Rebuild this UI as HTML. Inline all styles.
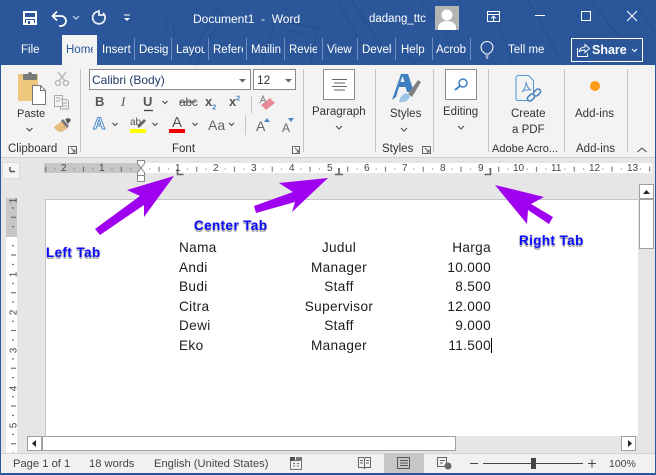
<!DOCTYPE html>
<html><head><meta charset="utf-8"><style>
html,body{margin:0;padding:0}
body{width:656px;height:475px;overflow:hidden;position:relative;background:#e6e6e6;font-family:"Liberation Sans",sans-serif;color:#333}
.t{position:absolute;white-space:nowrap;line-height:14px;font-size:11.5px}
.w{color:#fff}
.c{overflow:hidden}
.b{position:absolute}
.d{position:absolute;font-size:13.6px;letter-spacing:.35px;line-height:16px;color:#1c1c1c;white-space:nowrap}
.ctr{transform:translateX(-50%)}
.r{transform:translateX(-100%)}
.lab{position:absolute;font:bold 13.4px "Liberation Sans",sans-serif;letter-spacing:.45px;line-height:15px;color:#0a0aff;white-space:nowrap;text-shadow:0 2px 0 #aaa,1px 1px 0 #ddd,-1px 1px 0 #ddd,1px 0 0 #eee,-1px 0 0 #eee}
.n{position:absolute;white-space:nowrap;top:163px;font-size:10px;line-height:11px;color:#444}
.v{position:absolute;white-space:nowrap;left:10.5px;font-size:10px;line-height:11px;color:#444;transform:rotate(-90deg)}
.s{position:absolute;white-space:nowrap;top:457px;font-size:11.2px;line-height:14px;color:#444}
svg{position:absolute;left:0;top:0}
</style></head><body>
<div class="b" style="left:0;top:0;width:656px;height:65px;background:#2b579a"></div>
<div class="b" style="left:0;top:65px;width:656px;height:92px;background:#f3f3f3"></div>
<div class="b" style="left:0;top:157px;width:656px;height:1px;background:#d2d2d2"></div>
<div class="b" style="left:62px;top:35px;width:35px;height:30px;background:#f3f3f3"></div>
<div class="b" style="left:45px;top:199px;width:593px;height:237px;background:#fff;border-top:1px solid #c6c6c6;border-left:1px solid #c6c6c6;box-sizing:border-box"></div>
<div class="b" style="left:44px;top:163px;width:96px;height:10px;background:#c6c6c6"></div>
<div class="b" style="left:140px;top:163px;width:512px;height:10px;background:#fff"></div>
<div class="b" style="left:6px;top:198px;width:11px;height:39px;background:#c6c6c6"></div>
<div class="b" style="left:6px;top:237px;width:11px;height:216px;background:#fff"></div>
<div class="b" style="left:2px;top:162px;width:18px;height:17px;background:#f4f4f4;border:1px solid #dcdcdc;box-sizing:border-box"></div>
<div class="b" style="left:0;top:453px;width:656px;height:20px;background:#f1f1f1;border-top:1px solid #d4d4d4;box-sizing:border-box"></div>
<div class="b" style="left:384px;top:453px;width:40px;height:20px;background:#c6c6c6"></div>
<div class="b" style="left:0;top:473px;width:656px;height:2px;background:#2b579a"></div>
<div class="b" style="left:0;top:65px;width:1px;height:410px;background:#2b579a"></div>
<div class="b" style="left:655px;top:65px;width:1px;height:410px;background:#2b579a"></div>

<svg width="656" height="475" viewBox="0 0 656 475" fill="none">
<defs><pattern id="tk" x="140" y="163" width="37.75" height="10" patternUnits="userSpaceOnUse">
<rect x="9.2" y="5.5" width="1" height="1" fill="#666"/><rect x="18.5" y="3.7" width="1" height="5" fill="#666"/><rect x="27.9" y="5.5" width="1" height="1" fill="#666"/></pattern>
<pattern id="tv" x="6" y="236" width="11" height="37.75" patternUnits="userSpaceOnUse">
<rect x="6" y="9.2" width="2" height="1" fill="#555"/><rect x="5" y="18.5" width="5" height="1" fill="#555"/><rect x="6" y="27.9" width="2" height="1" fill="#555"/></pattern></defs>
<!-- background doodles -->
<g stroke="#264f8e" stroke-width="1.5">
<path d="M188 62 L218 8 L224 12 L196 65M168 30 q-6 -10 -1 -12 q5 0 6 8 l2 12"/>
<path d="M262 64 L275 20 L318 28 L310 64M285 30 l18 4M338 0 L362 46M352 0 L384 50M420 0 L448 38M528 0 L560 58M590 0 L622 40M640 10 L656 34M408 56 q6 8 14 2M490 4 L512 60"/>
</g>
<!-- save -->
<rect x="24" y="12" width="12" height="12" stroke="#fff" stroke-width="2"/>
<rect x="25" y="17" width="10" height="2" fill="#fff"/><rect x="26" y="20" width="8" height="4" fill="#fff"/><rect x="28" y="21" width="2" height="3" fill="#2b579a"/>
<!-- undo -->
<path d="M53 16 H61 a5 5 0 0 1 0 10 h-2M57 11.5 L52.5 16 L57 20.5" stroke="#fff" stroke-width="1.7"/>
<path d="M73 16 l3 3 l3 -3" stroke="#cdd8ea" stroke-width="1.2"/>
<path d="M98 11.5 a6.2 6.2 0 1 0 5 1.5M99 10 v5 h5" stroke="#e8edf5" stroke-width="1.8"/>
<path d="M124 15 h6" stroke="#fff"/><path d="M124 18 h6 l-3 3z" fill="#fff"/>
<!-- avatar -->
<rect x="435" y="6" width="24" height="24" fill="#b4b4b4"/><circle cx="447" cy="15" r="5.5" fill="#fff"/><path d="M438 30 v-4 q2 -4 7 -5 h4 q5 1 7 5 v4z" fill="#fff"/>
<!-- window ctrls -->
<path d="M487.5 11.5 h12 v10 h-12zM487.5 14.5 h12M493.5 21 v-4M491 18.5 l2.500 -2.500 l2.500 2.500" stroke="#fff"/>
<path d="M535 15.5 h10" stroke="#fff"/><rect x="581.5" y="11.5" width="9" height="9" stroke="#fff"/>
<path d="M627 11 l10 10M637 11 l-10 10" stroke="#fff"/>
<!-- tab separators -->
<g stroke="#6f90bf"><path d="M134.5 38 V60M171.5 38 V60M208.5 38 V60M246.5 38 V60M284.5 38 V60M322.5 38 V60M357.5 38 V60M395.5 38 V60M432.5 38 V60M470.5 38 V60"/></g>
<path d="M485.5 54 q-4.500 -3 -4.500 -6.500 a6 6 0 0 1 12 0 q0 3.500 -4.500 6.500zM485.500 56 h3M486 58 h2" stroke="#fff"/>
<rect x="571.5" y="38.5" width="71" height="23" stroke="#fff"/>
<path d="M577.5 48 v8.5 h10 v-3M579 52 q1 -5 6 -5 v-2.5 l4.5 4 l-4.5 4 v-2.5 q-4 0 -6 2" stroke="#fff"/>
<path d="M632 49 l2.5 2.5 l2.5 -2.5" stroke="#fff"/>
<!-- group separators -->
<g stroke="#c6c6c6"><path d="M80.5 69 V152M303.5 69 V152M375.5 69 V152M433.5 69 V152M488.5 69 V152M564.5 69 V152M627.5 69 V152M251.5 96 V113M245.5 115 V135"/></g>
<!-- paste -->
<rect x="18" y="74" width="20" height="27" rx="1" fill="#ecc77c"/><rect x="23" y="74" width="14" height="6" rx="1" fill="#7a7a7a"/><circle cx="30" cy="74" r="2" fill="#7a7a7a"/>
<path d="M32.5 85.5 h8 l5 5 v14 h-13z" fill="#fff" stroke="#777"/><path d="M40.500 85.500 v5 h5" stroke="#777"/>
<path d="M26.500 128 l3 3 l3 -3" stroke="#444"/>
<!-- scissors etc -->
<g stroke="#b3b3b3" stroke-width="1.3"><circle cx="58" cy="83" r="2.500"/><circle cx="66" cy="83" r="2.500"/><path d="M59 81 L66 72M65 81 L58 72"/></g>
<g stroke="#a9a9a9"><path d="M54.500 95.500 h8 v11 h-8zM60.500 99.500 h6 l2 2 v7.500 h-8 v-2M56 98 h4M56 101 h4M62 103 h5M62 106 h5"/></g>
<path d="M54 127 l8 -6 l6 7 l-6 4 q-6 0 -8 -5z" fill="#e8bd82"/><path d="M61 121 l6 7 l2 -2 l-6 -7z" fill="#777"/><path d="M65 119 l4 -1 l2 2 l-3 4z" fill="#555"/>
<!-- font boxes -->
<rect x="89.5" y="69.5" width="161" height="20" fill="#fff" stroke="#8b8b8b"/><path d="M239 79 h7 l-3.500 3.500z" fill="#666"/>
<rect x="253.5" y="69.5" width="42" height="20" fill="#fff" stroke="#8b8b8b"/><path d="M285 79 h7 l-3.500 3.500z" fill="#666"/>
<!-- underline etc -->
<path d="M144 110.5 h9" stroke="#444" stroke-width="1.3"/>
<path d="M162.5 101 l2.500 2.500 l2.500 -2.500" stroke="#444"/>
<path d="M179 102 h17" stroke="#444" stroke-width="1"/>
<!-- eraser -->
<path d="M261 105 l9 -7 l5 5 l-9 7z" fill="#e98a96"/>
<path d="M260 103 l3 -7 l3 7M261.500 100.500 h3" stroke="#888"/>
<!-- row2 chevrons -->
<g stroke="#444"><path d="M112.500 123 l2.500 2.500 l2.500 -2.500M152.500 123 l2.500 2.500 l2.500 -2.500M192.500 123 l2.500 2.500 l2.500 -2.500M229 123 l2.500 2.500 l2.500 -2.500"/></g>
<rect x="130" y="129" width="16" height="4" fill="#ffff00"/>
<path d="M137 126 l7 -7 l2 2 l-7 7z" fill="#666"/>
<rect x="169" y="129" width="16" height="4" fill="#f00000"/>
<path d="M264 122 l3 -4 l3 4z" fill="#4a86c5"/><path d="M288 118 h6 l-3 4z" fill="#4a86c5"/>
<!-- launchers -->
<g stroke="#666"><path d="M68.500 146.500 h8 v7 h-8zM71 148 l4 4M75 149.500 v2.500 h-2.500"/><path d="M292.500 146.500 h7 v7 h-7zM295 148 l4 4M299 149.500 v2.500 h-2.500"/><path d="M422.500 146.500 h8 v7 h-8zM425 148 l4 4M429 149.500 v2.500 h-2.500"/></g>
<path d="M637.500 152 l4.500 -4 l4.500 4" stroke="#444"/>
<!-- paragraph -->
<rect x="323.5" y="69.5" width="31" height="30" fill="#fff" stroke="#8b8b8b"/>
<path d="M332 79.5 h15M334 83 h11M332 86.500 h15M334 90 h11" stroke="#666"/>
<path d="M336 126 l3 3 l3 -3M401 128 l3 3 l3 -3M458 126 l3 3 l3 -3" stroke="#444"/>
<!-- styles -->
<path d="M392 100 L401 74 H408 L414 92 H407 L405.500 87 H399 L396 97 z" fill="#3f7fc1"/><path d="M400.500 82 H404.500 L402.500 76z" fill="#f3f3f3"/>
<path d="M399 102 q1 -7 7 -9 l4 3 q-2 7 -11 6z" fill="#9cc3e6"/><path d="M408 94 l10 -14 l3 2 l-9 15z" fill="#7f7f7f"/>
<!-- editing -->
<rect x="445.5" y="69.5" width="31" height="30" fill="#fff" stroke="#8b8b8b"/>
<circle cx="463" cy="83" r="4" stroke="#3f7fc1" stroke-width="1.500"/><path d="M460 86 l-5 4" stroke="#3f7fc1" stroke-width="2"/>
<!-- pdf -->
<path d="M518.5 75.5 h10 l5 5 v17 q0 3 -3 3 h-12 q-3 0 -2.500 -3 v-19 q0 -3 2.500 -3z" stroke="#5a94d0" fill="#f3f3f3"/>
<path d="M522 92 q4 -4 4 -10 q1 6 5 8 q-6 -1 -9 2z" stroke="#5a94d0"/>
<g stroke="#3f7fc1" stroke-width="1.500"><rect x="527" y="95" width="8" height="5" rx="2.500" transform="rotate(-45 531 97.500)" fill="#f3f3f3"/><rect x="533" y="90" width="8" height="5" rx="2.500" transform="rotate(-45 537 92.500)" fill="#f3f3f3"/></g>
<circle cx="595" cy="86" r="5" fill="#ff9a1a"/>
<!-- tab selector -->
<path d="M10 171.500 h5 M10 167 v4.500" stroke="#555" stroke-width="1.500"/>
<!-- ruler -->
<rect x="44" y="163" width="608" height="10" fill="url(#tk)"/>
<rect x="6" y="198" width="11" height="255" fill="url(#tv)"/>
<!-- indents -->
<path d="M137.500 160.500 h7 v3 l-3.500 4.500 l-3.500 -4.500zM137.500 175.500 v-3 l3.500 -4.500 l3.500 4.500 v3z" fill="#fff" stroke="#888"/><rect x="137.5" y="175.5" width="7" height="6" fill="#fff" stroke="#888"/>
<!-- tab stops -->
<path d="M177.500 169 v5.500 h6" stroke="#666" stroke-width="1.600"/>
<path d="M335 174.500 h8 M339 168 v6.500" stroke="#666" stroke-width="1.600"/>
<path d="M490.500 168 v6.500 h-6" stroke="#666" stroke-width="1.600"/>
<!-- scrollbars -->
<rect x="639.500" y="184.500" width="14" height="14" fill="#fff" stroke="#a0a0a0"/><path d="M643 194 h7 l-3.500 -4z" fill="#222"/>
<rect x="639.500" y="199.500" width="14" height="49" fill="#fff" stroke="#a0a0a0"/>
<rect x="27.500" y="436.500" width="14" height="14" fill="#fff" stroke="#a0a0a0"/><path d="M36 440 v7 l-4 -3.500z" fill="#222"/>
<rect x="42.500" y="436.500" width="413" height="14" fill="#fff" stroke="#a0a0a0"/>
<rect x="621.500" y="436.500" width="14" height="14" fill="#fff" stroke="#a0a0a0"/><path d="M628 440 v7 l4 -3.500z" fill="#222"/>
<!-- status icons -->
<g stroke="#777"><path d="M290.500 460.500 h11 v9 h-11zM293 463.500 h2M297 463.500 h2M293 466 h2M297 466 h2"/></g><rect x="290" y="457" width="5" height="4" fill="#555"/><rect x="296" y="457" width="6" height="3" fill="#777"/>
<g stroke="#666"><path d="M358.500 457.500 h5 l1 1 l1 -1 h5 v10 h-5 l-1 1 l-1 -1 h-5zM364.500 458 v10M360 460.500 h3M360 463 h3M366 460.500 h3M366 463 h3"/></g>
<g stroke="#555"><path d="M397.500 457.500 h12 v11 h-12zM400 460.500 h8M400 463 h8M400 465.500 h8"/></g>
<g stroke="#666"><path d="M437.500 457.500 h9 v9 h-9zM440 460.500 h5M440 463 h3"/></g><circle cx="448" cy="466" r="3.500" fill="#666"/>
<path d="M470 463.500 h8M483 463.500 h100M588 463.500 h8M592 459.500 v8" stroke="#444"/>
<rect x="531" y="458" width="5" height="11" fill="#444"/>
<!-- arrows -->
<g fill="#a000f0">
<path d="M174 176 L127 190 L140 196 L95 229 L100 235 L144 205 L144 217 Z"/>
<path d="M328 178 L279 183 L293 192 L254 206 L256 213 L295 202 L292 212 Z"/>
<path d="M495 185 L544 197 L531 204 L553 217 L549 224 L528 210 L527 224 Z"/>
</g>
<!-- cursor -->
<path d="M491.500 338 V353" stroke="#000"/>
</svg>

<!-- title -->
<div class="t w" style="left:193px;top:12px;font-size:12px">Document1&nbsp; -&nbsp; Word</div>
<div class="t w" style="left:369px;top:12px;font-size:11.5px">dadang_ttc</div>
<!-- tabs -->
<div class="t w" style="left:21px;top:43px">File</div>
<div class="t c" style="left:66px;top:43px;width:27px;color:#2b579a;font-size:11.5px">Home</div>
<div class="t w c" style="left:102px;top:43px;width:29px">Insert</div>
<div class="t w c" style="left:139px;top:43px;width:29px">Design</div>
<div class="t w c" style="left:176px;top:43px;width:29px">Layout</div>
<div class="t w c" style="left:213px;top:43px;width:30px">References</div>
<div class="t w c" style="left:251px;top:43px;width:30px">Mailings</div>
<div class="t w c" style="left:289px;top:43px;width:28px">Review</div>
<div class="t w" style="left:327px;top:43px">View</div>
<div class="t w c" style="left:362px;top:43px;width:30px">Developer</div>
<div class="t w" style="left:401px;top:43px">Help</div>
<div class="t w c" style="left:436px;top:43px;width:30px">Acrobat</div>
<div class="t w" style="left:508px;top:43px">Tell me</div>
<div class="t w" style="left:592px;top:43px;font-size:12.500px;font-weight:bold">Share</div>
<!-- ribbon text -->
<div class="t" style="left:17px;top:107px;font-size:11px">Paste</div>
<div class="t" style="left:8px;top:142px">Clipboard</div>
<div class="t" style="left:172px;top:142px">Font</div>
<div class="t" style="left:92px;top:73px;color:#1f3a66;font-size:12px">Calibri (Body)</div>
<div class="t" style="left:257px;top:73px;font-size:12px">12</div>
<div class="t" style="left:95px;top:95px;font:bold 13px 'Liberation Sans';color:#555;line-height:14px">B</div>
<div class="t" style="left:121px;top:95px;font:italic 13px 'Liberation Serif';color:#555;line-height:14px">I</div>
<div class="t" style="left:143px;top:95px;font:bold 13px 'Liberation Sans';color:#555;line-height:14px">U</div>
<div class="t" style="left:179px;top:95px;font-size:12px;color:#555;letter-spacing:-.3px">abc</div>
<div class="t" style="left:205px;top:95px;font:bold 13px 'Liberation Sans';color:#555;line-height:14px">x<sub style="font-size:7px;color:#3f7fc1;line-height:0">2</sub></div>
<div class="t" style="left:229px;top:95px;font:bold 13px 'Liberation Sans';color:#555;line-height:14px">x<sup style="font-size:7px;color:#3f7fc1;line-height:0">2</sup></div>
<div class="t" style="left:93px;top:115px;font:bold 17px 'Liberation Sans';color:#fff;line-height:18px;-webkit-text-stroke:1px #4a86c5">A</div>
<div class="t" style="left:130px;top:116px;font-size:10px;color:#555">ab</div>
<div class="t" style="left:172px;top:116px;font-size:15px;color:#555;line-height:14px">A</div>
<div class="t" style="left:208px;top:118px;font-size:14px;color:#666">Aa</div>
<div class="t" style="left:256px;top:119px;font-size:14px;color:#666">A</div>
<div class="t" style="left:282px;top:121px;font-size:12px;color:#666">A</div>
<div class="t" style="left:312px;top:105px">Paragraph</div>
<div class="t" style="left:390px;top:107px">Styles</div>
<div class="t" style="left:443px;top:105px">Editing</div>
<div class="t" style="left:511px;top:107px">Create</div>
<div class="t" style="left:512px;top:123px">a PDF</div>
<div class="t" style="left:575px;top:107px">Add-ins</div>
<div class="t" style="left:382px;top:142px">Styles</div>
<div class="t" style="left:492px;top:142px;font-size:11px">Adobe Acro...</div>
<div class="t" style="left:576px;top:142px">Add-ins</div>
<!-- ruler nums -->
<div class="n" style="left:61px">2</div>
<div class="n" style="left:99px">1</div>
<div class="n" style="left:175px">1</div>
<div class="n" style="left:213px">2</div>
<div class="n" style="left:251px">3</div>
<div class="n" style="left:289px">4</div>
<div class="n" style="left:327px">5</div>
<div class="n" style="left:364px">6</div>
<div class="n" style="left:402px">7</div>
<div class="n" style="left:440px">8</div>
<div class="n" style="left:478px">9</div>
<div class="n" style="left:513px">10</div>
<div class="n" style="left:551px">11</div>
<div class="n" style="left:589px">12</div>
<div class="n" style="left:627px">13</div>
<!-- vertical nums -->
<div class="v" style="top:195px">1</div>
<div class="v" style="top:269px">1</div>
<div class="v" style="top:307px">2</div>
<div class="v" style="top:345px">3</div>
<div class="v" style="top:383px">4</div>
<div class="v" style="top:420px">5</div>
<!-- doc -->
<div class="d" style="left:179px;top:240px">Nama</div><div class="d ctr" style="left:339px;top:240px">Judul</div><div class="d r" style="left:491px;top:240px">Harga</div>
<div class="d" style="left:179px;top:260px">Andi</div><div class="d ctr" style="left:339px;top:260px">Manager</div><div class="d r" style="left:491px;top:260px">10.000</div>
<div class="d" style="left:179px;top:279px">Budi</div><div class="d ctr" style="left:339px;top:279px">Staff</div><div class="d r" style="left:491px;top:279px">8.500</div>
<div class="d" style="left:179px;top:299px">Citra</div><div class="d ctr" style="left:339px;top:299px">Supervisor</div><div class="d r" style="left:491px;top:299px">12.000</div>
<div class="d" style="left:179px;top:318px">Dewi</div><div class="d ctr" style="left:339px;top:318px">Staff</div><div class="d r" style="left:491px;top:318px">9.000</div>
<div class="d" style="left:179px;top:338px">Eko</div><div class="d ctr" style="left:339px;top:338px">Manager</div><div class="d r" style="left:491px;top:338px">11.500</div>
<!-- labels -->
<div class="lab" style="left:46px;top:245px">Left Tab</div>
<div class="lab" style="left:194px;top:218px">Center Tab</div>
<div class="lab" style="left:519px;top:233px">Right Tab</div>
<!-- status -->
<div class="s" style="left:13px">Page 1 of 1</div>
<div class="s" style="left:89px">18 words</div>
<div class="s" style="left:154px">English (United States)</div>
<div class="s" style="left:609px;font-size:10.500px">100%</div>
</body></html>
